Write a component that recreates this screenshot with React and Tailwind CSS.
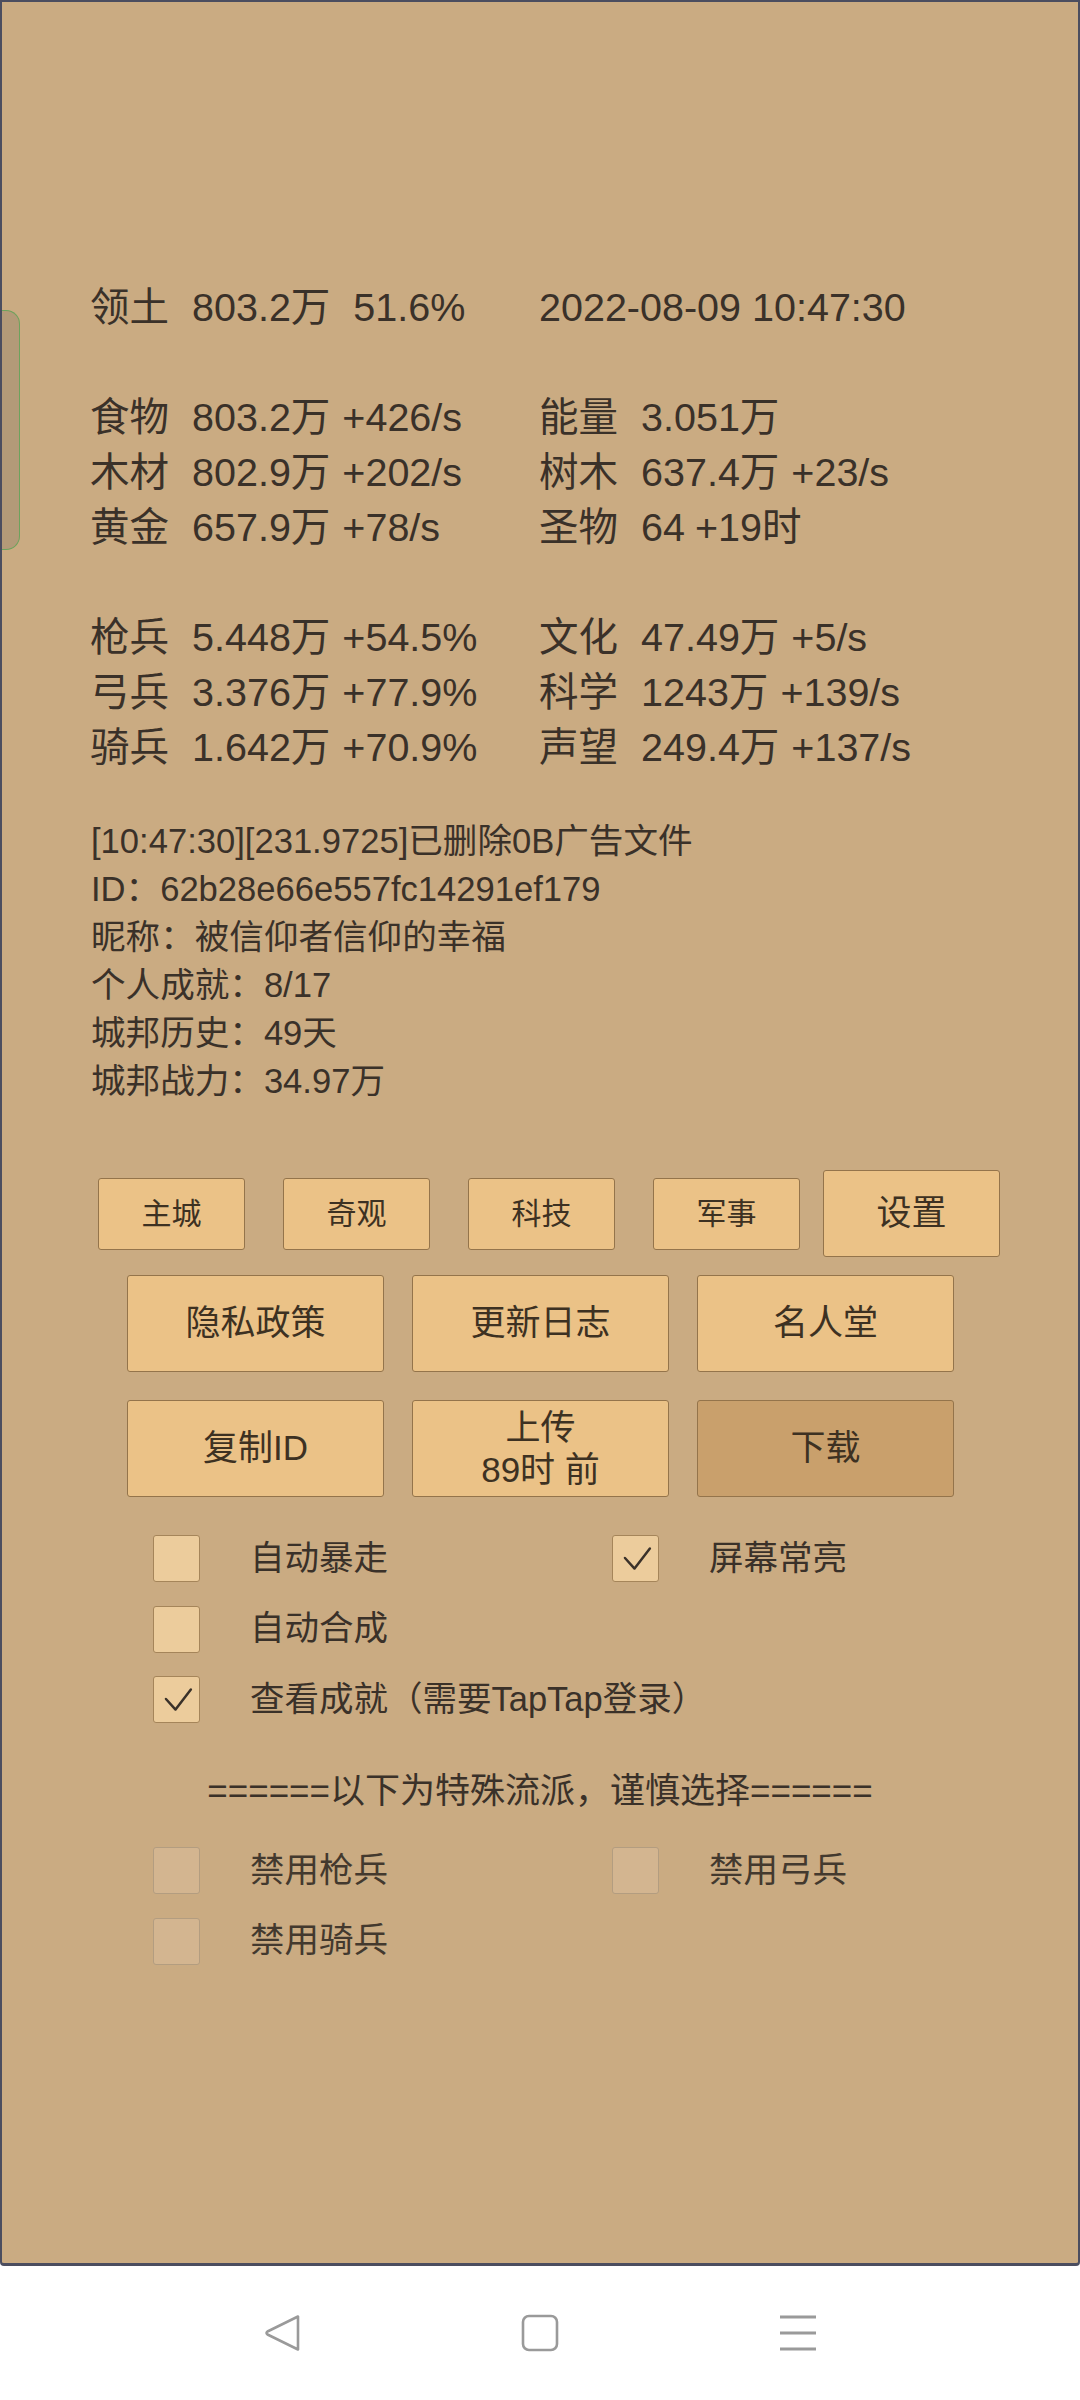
import React from "react";

const F = "font-['Liberation_Sans','Noto_Sans_CJK_SC',sans-serif]";

function StatRow({ label, value, rate, gap = "ml-[12px]" }) {
  return (
    <div className="flex h-[55px] items-center whitespace-pre">
      <span className="w-[102px] shrink-0">{label}</span>
      <span>{value}</span>
      {rate ? <span className={gap}>{rate}</span> : null}
    </div>
  );
}

function Blank() {
  return <div className="h-[55px]" />;
}

function Btn({ children, className = "" }) {
  return (
    <div
      className={`flex items-center justify-center rounded-[3px] border border-[#94744b] text-[#3d3122] ${className}`}
    >
      {children}
    </div>
  );
}

function Check({ checked, disabled }) {
  return (
    <div
      className={`flex h-[47px] w-[47px] shrink-0 items-center justify-center rounded-[3px] border ${
        disabled ? "border-[#b39d80] bg-[#d3b590]" : "border-[#a5855a] bg-[#eccc9c]"
      }`}
    >
      {checked ? (
        <svg width="47" height="47" viewBox="0 0 47 47">
          <path d="M12.5 23 L22.5 34 L38.5 13" fill="none" stroke="#3a3129" strokeWidth="2.6" strokeLinecap="round" strokeLinejoin="round" />
        </svg>
      ) : null}
    </div>
  );
}

function CheckItem({ label, checked, disabled }) {
  return (
    <div className="flex h-[47px] w-[459px] items-center">
      <Check checked={checked} disabled={disabled} />
      <span className="ml-[50px] whitespace-pre">{label}</span>
    </div>
  );
}

export default function App() {
  return (
    <div className={`flex h-[2400px] w-[1080px] flex-col bg-white ${F} text-[#3a3129]`}>
      <div className="relative h-[2266px] w-[1080px] rounded-b-[4px] border-2 border-b-[3px] border-[#4b4d5f] bg-[#caab82]">
        {/* side tab */}
        <div className="absolute left-0 top-[308px] h-[240px] w-[18px] rounded-r-[14px] border border-l-0 border-[#6da25c] bg-[#b39a78]" />

        {/* stats */}
        <div className="flex pl-[88px] pt-[278px] text-[39.5px]">
          <div className="w-[449px]">
            <StatRow label="领土" value="803.2万" rate="51.6%" gap="ml-[23px]" />
            <Blank />
            <StatRow label="食物" value="803.2万" rate="+426/s" />
            <StatRow label="木材" value="802.9万" rate="+202/s" />
            <StatRow label="黄金" value="657.9万" rate="+78/s" />
            <Blank />
            <StatRow label="枪兵" value="5.448万" rate="+54.5%" />
            <StatRow label="弓兵" value="3.376万" rate="+77.9%" />
            <StatRow label="骑兵" value="1.642万" rate="+70.9%" />
          </div>
          <div className="w-[449px]">
            <div className="flex h-[55px] items-center whitespace-pre">2022-08-09 10:47:30</div>
            <Blank />
            <StatRow label="能量" value="3.051万" />
            <StatRow label="树木" value="637.4万" rate="+23/s" />
            <StatRow label="圣物" value="64" rate="+19时" gap="ml-[10px]" />
            <Blank />
            <StatRow label="文化" value="47.49万" rate="+5/s" />
            <StatRow label="科学" value="1243万" rate="+139/s" />
            <StatRow label="声望" value="249.4万" rate="+137/s" />
          </div>
        </div>

        {/* log */}
        <div className="mt-[43px] pl-[89px] text-[34.6px]">
          {[
            "[10:47:30][231.9725]已删除0B广告文件",
            "ID：62b28e66e557fc14291ef179",
            "昵称：被信仰者信仰的幸福",
            "个人成就：8/17",
            "城邦历史：49天",
            "城邦战力：34.97万",
          ].map((t) => (
            <div key={t} className="flex h-[48px] items-center whitespace-pre">
              {t}
            </div>
          ))}
        </div>

        {/* buttons row 1 */}
        <div className="mt-[64px] flex items-center gap-[23px] pl-[96px]">
          <div className="flex gap-[38px] text-[30px]">
            {["主城", "奇观", "科技", "军事"].map((t) => (
              <Btn key={t} className="h-[72px] w-[147px] bg-[#ebc287]">
                {t}
              </Btn>
            ))}
          </div>
          <Btn className="h-[87px] w-[177px] bg-[#ebc287] text-[35px]">设置</Btn>
        </div>

        {/* buttons row 2 */}
        <div className="mt-[18px] flex gap-[28px] pl-[125px] text-[35px]">
          <Btn className="h-[97px] w-[257px] bg-[#ebc287]">隐私政策</Btn>
          <Btn className="h-[97px] w-[257px] bg-[#ebc287]">更新日志</Btn>
          <Btn className="h-[97px] w-[257px] bg-[#ebc287]">名人堂</Btn>
        </div>

        {/* buttons row 3 */}
        <div className="mt-[28px] flex gap-[28px] pl-[125px] text-[35px]">
          <Btn className="h-[97px] w-[257px] bg-[#ebc287]">复制ID</Btn>
          <Btn className="h-[97px] w-[257px] flex-col bg-[#ebc287] leading-[42px]">
            <span>上传</span>
            <span className="whitespace-pre">89时 前</span>
          </Btn>
          <Btn className="h-[97px] w-[257px] bg-[#c9a06c]">下载</Btn>
        </div>

        {/* checkboxes */}
        <div className="mt-[38px] flex flex-col gap-[23.5px] pl-[151px] text-[34.5px]">
          <div className="flex">
            <CheckItem label="自动暴走" />
            <CheckItem label="屏幕常亮" checked />
          </div>
          <div className="flex">
            <CheckItem label="自动合成" />
          </div>
          <div className="flex">
            <CheckItem label="查看成就（需要TapTap登录）" checked />
          </div>
        </div>

        <div className="mt-[44px] flex h-[48px] items-center justify-center whitespace-pre text-[35px]">
          ======以下为特殊流派，谨慎选择======
        </div>

        <div className="mt-[32px] flex flex-col gap-[23.5px] pl-[151px] text-[34.5px] text-[#43392e]">
          <div className="flex">
            <CheckItem label="禁用枪兵" disabled />
            <CheckItem label="禁用弓兵" disabled />
          </div>
          <div className="flex">
            <CheckItem label="禁用骑兵" disabled />
          </div>
        </div>
      </div>

      {/* nav bar */}
      <div className="flex h-[134px] items-center justify-center gap-[218px]">
        <svg width="40" height="40" viewBox="0 0 40 40">
          <path d="M36 3.5 L36 36.5 L5.5 21.5 Q3.5 20 5.5 18.5 Z" fill="none" stroke="#9a9a9a" strokeWidth="2.6" strokeLinejoin="round" />
        </svg>
        <svg width="40" height="40" viewBox="0 0 40 40">
          <rect x="3" y="3" width="34" height="34" rx="6" fill="none" stroke="#9a9a9a" strokeWidth="2.6" />
        </svg>
        <svg width="40" height="40" viewBox="0 0 40 40">
          <line x1="2" y1="4" x2="38" y2="4" stroke="#9a9a9a" strokeWidth="3" />
          <line x1="2" y1="20" x2="38" y2="20" stroke="#9a9a9a" strokeWidth="3" />
          <line x1="2" y1="36" x2="38" y2="36" stroke="#9a9a9a" strokeWidth="3" />
        </svg>
      </div>
    </div>
  );
}
